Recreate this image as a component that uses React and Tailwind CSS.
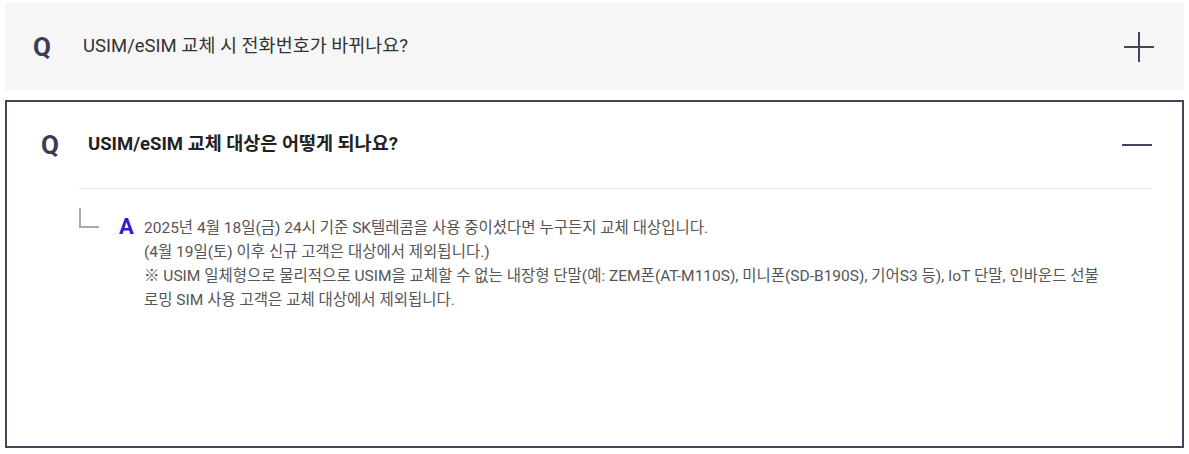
import React from 'react'

const font = { fontFamily: 'Roboto, "Noto Sans CJK KR", sans-serif' }

const answerLines = [
  '2025년 4월 18일(금) 24시 기준 SK텔레콤을 사용 중이셨다면 누구든지 교체 대상입니다.',
  '(4월 19일(토) 이후 신규 고객은 대상에서 제외됩니다.)',
  '※ USIM 일체형으로 물리적으로 USIM을 교체할 수 없는 내장형 단말(예: ZEM폰(AT-M110S), 미니폰(SD-B190S), 기어S3 등), IoT 단말, 인바운드 선불',
  '로밍 SIM 사용 고객은 교체 대상에서 제외됩니다.'
]

const PlusIcon = () => (
  <span className="relative block w-[30px] h-[30px]">
    <span className="absolute left-0 top-[14px] w-[30px] h-[2px] bg-[#46435c]" />
    <span className="absolute top-0 left-[14px] w-[2px] h-[30px] bg-[#46435c]" />
  </span>
)

const MinusIcon = () => (
  <span className="relative block w-[30px] h-[30px]">
    <span className="absolute left-0 top-[14px] w-[30px] h-[2px] bg-[#46435c]" />
  </span>
)

export default function App() {
  return (
    <div className="w-[1189px] h-[454px] bg-white px-[5px] pt-[3px]" style={font}>
      {/* Collapsed item */}
      <div className="flex items-center h-[87px] bg-[#f6f6f6] pl-[28px] pr-[30px]">
        <span className="w-[50px] text-[26px] font-bold text-[#3e3a55] leading-none">Q</span>
        <span className="flex-1 text-[18.5px] text-[#333]">
          USIM/eSIM 교체 시 전화번호가 바뀌나요?
        </span>
        <PlusIcon />
      </div>

      {/* Expanded item */}
      <div className="mt-[10px] h-[348px] border-2 border-[#46435c] bg-white">
        <div className="flex items-center h-[86px] pl-[34px] pr-[30px]">
          <span className="w-[47px] text-[26px] font-bold text-[#3e3a55] leading-none">Q</span>
          <span className="flex-1 text-[18.5px] font-bold text-[#222]">
            USIM/eSIM 교체 대상은 어떻게 되나요?
          </span>
          <MinusIcon />
        </div>
        <div className="ml-[72px] mr-[30px] border-t border-[#e5e5e5]" />
        <div className="flex items-start ml-[72px] mr-[30px] pt-[19px]">
          <span className="w-[20px] h-[20px] border-l-2 border-b-2 border-[#ababab] shrink-0" />
          <span className="ml-[20px] mt-[8px] w-[25px] shrink-0 text-[22px] font-bold text-[#3418d4] leading-[22px]">A</span>
          <div className="mt-[8px] text-[15.5px] leading-[24px] text-[#555]">
            {answerLines.map((line, i) => (
              <p key={i} className="whitespace-nowrap">{line}</p>
            ))}
          </div>
        </div>
      </div>
    </div>
  )
}
